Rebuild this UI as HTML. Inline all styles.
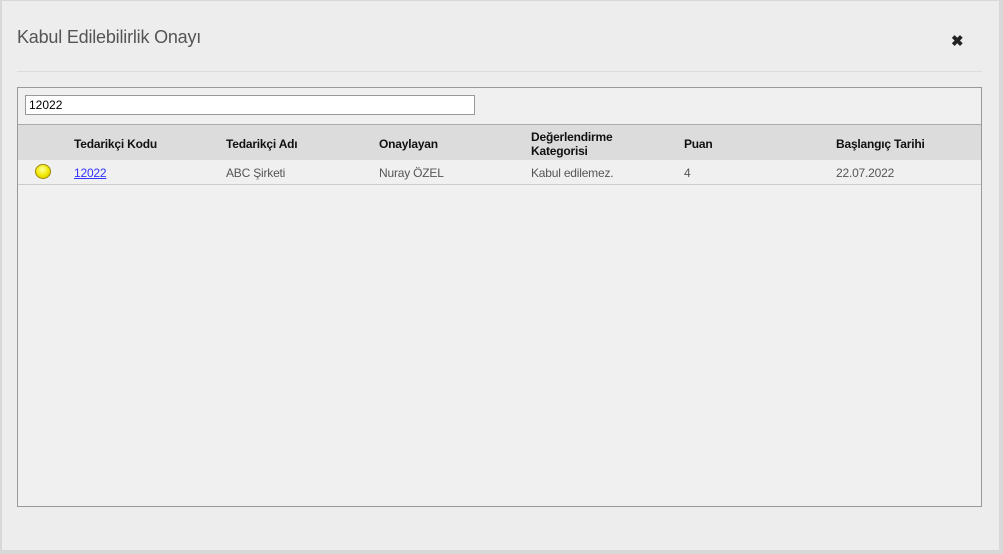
<!DOCTYPE html>
<html><head><meta charset="utf-8"><style>
body{margin:0;width:1003px;height:554px;background:#d8d8d8;position:relative;overflow:hidden;font-family:"Liberation Sans",sans-serif}
.m{position:absolute;left:2px;top:1px;width:997px;height:549px;background:#ededed}
.t{position:absolute;left:17px;top:27px;font-size:18px;color:#555;letter-spacing:-0.2px}
.x{position:absolute;left:951px;top:32px;font-size:15px;font-weight:bold;color:#222}
.hr{position:absolute;left:17px;top:71px;width:965px;height:1px;background:#dcdcdc}
.p{position:absolute;left:17px;top:87px;width:963px;height:418px;border:1px solid #999;background:#f0f0f0}
.in{position:absolute;left:7px;top:7px;width:445px;height:18px;border:1px solid #999;background:#fff;font-size:12px;line-height:18px;padding-left:3px;color:#000}
.h{position:absolute;left:0;top:36px;width:963px;height:35px;background:#dcdcdc;border-top:1px solid #aaa}
.h span{position:absolute;font-size:12px;font-weight:bold;color:#111;line-height:14px;letter-spacing:-0.2px}
.r{position:absolute;left:0;top:72px;width:963px;height:24px;border-bottom:1px solid #ccc}
.r span{position:absolute;top:6px;font-size:12px;color:#555;letter-spacing:-0.2px}
.b{position:absolute;left:17px;top:4px;width:14px;height:13px;border-radius:50%;background:radial-gradient(circle at 45% 35%,#ffff9a,#f0e800 55%,#c8b400);border:1px solid #a08800}
</style></head><body>
<div class="m"></div>
<div class="t">Kabul Edilebilirlik Onayı</div>
<div class="x">✖</div>
<div class="hr"></div>
<div class="p">
<div class="in">12022</div>
<div class="h">
<span style="left:56px;top:12px">Tedarikçi Kodu</span>
<span style="left:208px;top:12px">Tedarikçi Adı</span>
<span style="left:361px;top:12px">Onaylayan</span>
<span style="left:513px;top:5px">Değerlendirme<br>Kategorisi</span>
<span style="left:666px;top:12px">Puan</span>
<span style="left:818px;top:12px">Başlangıç Tarihi</span>
</div>
<div class="r">
<div class="b"></div>
<span style="left:56px;color:#33f;text-decoration:underline">12022</span>
<span style="left:208px">ABC Şirketi</span>
<span style="left:361px">Nuray ÖZEL</span>
<span style="left:513px">Kabul edilemez.</span>
<span style="left:666px">4</span>
<span style="left:818px">22.07.2022</span>
</div>
</div>
</body></html>
